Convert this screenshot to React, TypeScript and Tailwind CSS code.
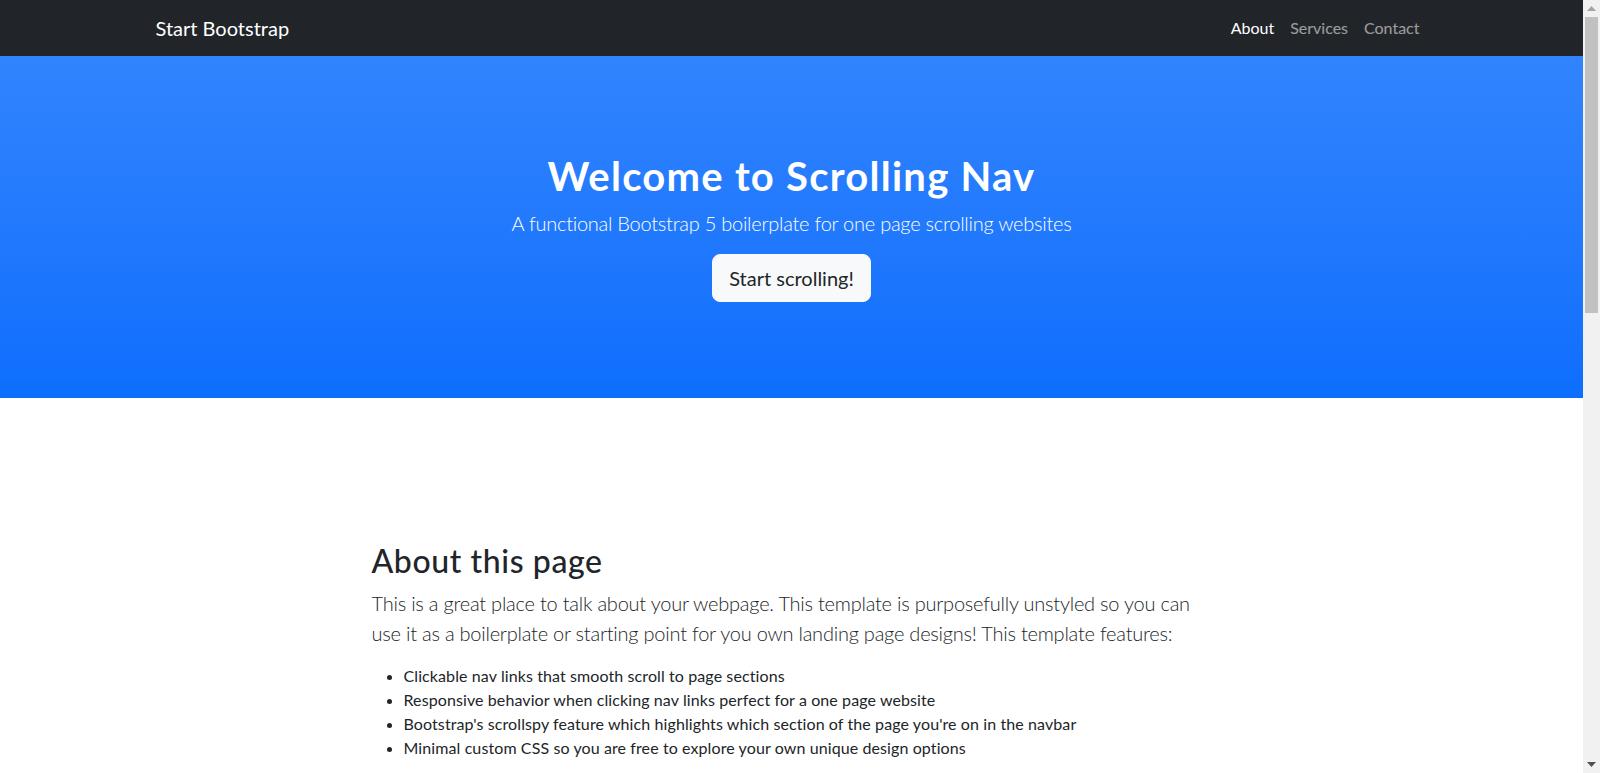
import React from "react";

const features = [
  "Clickable nav links that smooth scroll to page sections",
  "Responsive behavior when clicking nav links perfect for a one page website",
  "Bootstrap's scrollspy feature which highlights which section of the page you're on in the navbar",
  "Minimal custom CSS so you are free to explore your own unique design options",
];

const App = () => {
  return (
    <div className="flex h-[773px] w-full overflow-hidden bg-white font-['Lato',sans-serif] text-[#212529]">
      <div className="flex min-w-0 flex-1 flex-col">
        {/* Navbar */}
        <nav className="flex h-14 shrink-0 items-center bg-[#212529]">
          <div className="mx-auto flex w-[1320px] items-center justify-between px-6">
            <a href="#page-top" className="text-xl text-white">
              Start Bootstrap
            </a>
            <ul className="flex items-center">
              <li>
                <a href="#about" className="px-2 text-base text-white">
                  About
                </a>
              </li>
              <li>
                <a href="#services" className="px-2 text-base text-white/55">
                  Services
                </a>
              </li>
              <li>
                <a href="#contact" className="px-2 text-base text-white/55">
                  Contact
                </a>
              </li>
            </ul>
          </div>
        </nav>

        {/* Header */}
        <header className="shrink-0 bg-gradient-to-b from-[#3184fd] to-[#0d6efd] pt-24 pb-24 text-center text-white">
          <h1 className="mb-2 text-[40px] font-bold leading-[1.2] tracking-[1.25px]">Welcome to Scrolling Nav</h1>
          <p className="mb-4 text-xl font-light leading-normal tracking-[-0.25px]">
            A functional Bootstrap 5 boilerplate for one page scrolling websites
          </p>
          <a
            href="#about"
            className="inline-block rounded-lg border border-[#f8f9fa] bg-[#f8f9fa] px-4 py-2 text-xl leading-normal text-[#212529]"
          >
            Start scrolling!
          </a>
        </header>

        {/* About */}
        <section id="about" className="pt-36">
          <div className="mx-auto w-[840px]">
            <h2 className="mb-2 text-[32px] font-medium leading-[1.2] tracking-[0.6px]">About this page</h2>
            <p className="mb-4 whitespace-nowrap text-xl font-light leading-normal tracking-[-0.23px]">
              This is a great place to talk about your webpage. This template is purposefully unstyled so you can
              <br />
              use it as a boilerplate or starting point for you own landing page designs! This template features:
            </p>
            <ul className="list-disc pl-8 text-base leading-normal tracking-[0.1px]">
              {features.map((f) => (
                <li key={f}>{f}</li>
              ))}
            </ul>
          </div>
        </section>
      </div>

      {/* Scrollbar */}
      <div className="flex w-[17px] shrink-0 flex-col items-center bg-[#f1f1f1]">
        <div className="flex h-[17px] items-center justify-center">
          <svg width="9" height="5" viewBox="0 0 9 5">
            <path d="M4.5 0 L9 5 L0 5 Z" fill="#a3a3a3" />
          </svg>
        </div>
        <div className="h-[296px] w-[13px] bg-[#c1c1c1]" />
        <div className="flex-1" />
        <div className="flex h-[17px] items-center justify-center">
          <svg width="9" height="5" viewBox="0 0 9 5">
            <path d="M0 0 L9 0 L4.5 5 Z" fill="#505050" />
          </svg>
        </div>
      </div>
    </div>
  );
};

export default App;
